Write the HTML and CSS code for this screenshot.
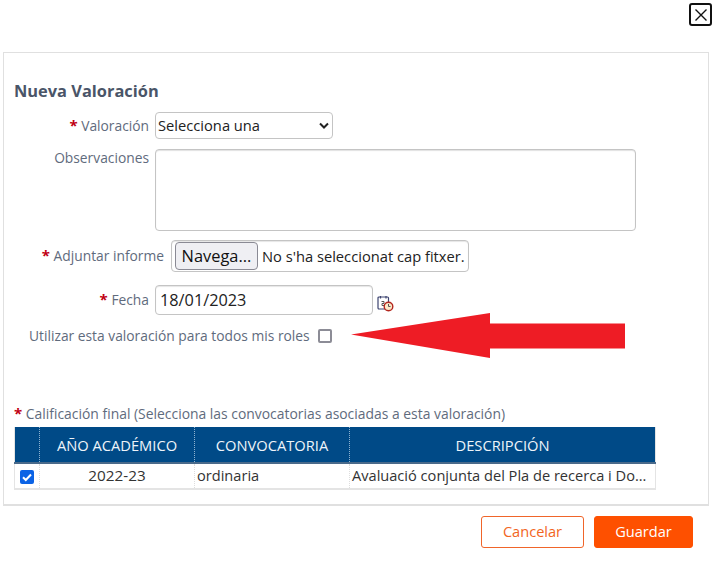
FILE: index.html
```html
<!DOCTYPE html>
<html lang="es">
<head>
<meta charset="utf-8">
<title>Nueva Valoración</title>
<link rel="stylesheet" href="styles.css">
</head>
<body>
<div class="topbar">
  <button class="close" type="button" aria-label="Cerrar">
    <svg width="18" height="18" viewBox="0 0 18 18"><path d="M3.500 3.500l11 11M14.500 3.500l-11 11" fill="none" stroke="#111" stroke-width="1.4"/></svg>
  </button>
</div>
<main class="panel">
  <h2 class="title">Nueva Valoración</h2>
  <div class="row row-val">
    <label class="label w-main"><span class="req">*</span> Valoración</label>
    <select class="field select"><option>Selecciona una</option></select>
  </div>
  <div class="row row-obs">
    <label class="label w-main label-obs">Observaciones</label>
    <textarea class="field area"></textarea>
  </div>
  <div class="row row-file">
    <label class="label w-file"><span class="req">*</span> Adjuntar informe</label>
    <div class="field file"><span class="browse">Navega...</span><span class="file-text">No s'ha seleccionat cap fitxer.</span></div>
  </div>
  <div class="row row-date">
    <label class="label w-main label-date"><span class="req">*</span> Fecha</label>
    <input class="field date" type="text" value="18/01/2023">
    <svg class="cal" width="17" height="17" viewBox="0 0 17 17">
      <rect x="1" y="2" width="10.500" height="12" rx="1" fill="#fff" stroke="#3d4470" stroke-width="1.2"/>
      <path d="M3.500 1v2.500M9 1v2.500" stroke="#3d4470" stroke-width="1.200"/>
      <path d="M4.500 6.500h2.500v2h-2v2h2.500" fill="none" stroke="#555" stroke-width="1"/>
      <circle cx="11.500" cy="11.500" r="4.300" fill="#fbe8c8" stroke="#b3261e" stroke-width="1.400"/>
      <path d="M11.500 9v2.500h2" fill="none" stroke="#555" stroke-width="1"/>
    </svg>
  </div>
  <div class="row row-check">
    <label class="label">Utilizar esta valoración para todos mis roles</label>
    <span class="box"></span>
  </div>
  <p class="label cal-label"><span class="req">*</span> Calificación final (Selecciona las convocatorias asociadas a esta valoración)</p>
  <table class="grid">
    <colgroup><col class="c1"><col class="c2"><col class="c3"><col class="c4"></colgroup>
    <thead>
      <tr><th></th><th>AÑO ACADÉMICO</th><th>CONVOCATORIA</th><th>DESCRIPCIÓN</th></tr>
    </thead>
    <tbody>
      <tr>
        <td class="center"><span class="tick"><svg width="14" height="14" viewBox="0 0 14 14"><path d="M3 7.200l2.800 2.800L11 4.500" fill="none" stroke="#fff" stroke-width="2"/></svg></span></td>
        <td class="center year">2022-23</td>
        <td>ordinaria</td>
        <td>Avaluació conjunta del Pla de recerca i Do...</td>
      </tr>
    </tbody>
  </table>
</main>
<div class="actions">
  <button class="btn ghost" type="button">Cancelar</button>
  <button class="btn solid" type="button">Guardar</button>
</div>
<svg class="arrow" width="277" height="47" viewBox="0 0 277 47"><path d="M1 22.500L140 1v10.500h135v25H140V46z" fill="#ee1c25"/></svg>
</body>
</html>
```
FILE: styles.css
```css
* { box-sizing: border-box; }
html, body { margin: 0; padding: 0; background: #fff; }
body {
  position: relative;
  width: 717px;
  height: 566px;
  overflow: hidden;
  font-family: "Open Sans", "Noto Sans", sans-serif;
  font-size: 14px;
  color: #333;
}
.topbar { display: flex; justify-content: flex-end; height: 52px; padding: 3px 5px 0 0; }
.close {
  width: 23px; height: 23px; padding: 0;
  display: flex; align-items: center; justify-content: center;
  background: #fff; border: 2px solid #111; border-radius: 3px;
}
.panel {
  margin-left: 3px; width: 706px; height: 454px;
  border: 1px solid #e0e0e0; border-width: 1px 1px 2px 1px;
  padding: 0 0 0 10px;
}
.title {
  margin: 27px 0 0; font-size: 16.400px; line-height: 22px; font-weight: 700;
  color: #4a5568;
}
.row { display: flex; }
.label { color: #5f6b7d; font-size: 13.800px; line-height: 18px; }
.w-main { width: 135px; text-align: right; margin-right: 6px; }
.w-file { width: 150px; text-align: right; margin-right: 7px; }
.req { color: #c00014; font-weight: 700; font-size: 15px; }
.field {
  border: 1px solid #c4c4c4; border-radius: 4px; background: #fff;
  font-family: "Open Sans", "Noto Sans", sans-serif; font-size: 14.700px; color: #222;
}
.row-val { margin-top: 10px; height: 27px; align-items: center; }
.select {
  width: 178px; height: 27px; padding: 0 0 2px 2px;
  appearance: none;
  background: #fff url("data:image/svg+xml,%3Csvg xmlns='http://www.w3.org/2000/svg' width='10' height='7' viewBox='0 0 10 7'%3E%3Cpath d='M1 1.500l4 4 4-4' fill='none' stroke='%23222' stroke-width='2'/%3E%3C/svg%3E") no-repeat right 3px center;
}
.row-obs { margin-top: 10px; }
.label-obs { padding-top: 0; }
.area { width: 481px; height: 82px; resize: none; display: block; box-shadow: inset 0 1px 1px rgba(0,0,0,.12); }
.row-file { margin-top: 9px; height: 31px; align-items: center; }
.file {
  width: 298px; height: 32px; display: flex; align-items: center; padding-left: 3px;
  box-shadow: inset 0 1px 1px rgba(0,0,0,.1);
}
.browse {
  width: 83px; height: 28px; line-height: 26px; text-align: center;
  background: #efeff3; border: 1px solid #8a8a94; border-radius: 4px; font-size: 16.400px; color: #111;
}
.file-text { margin-left: 4px; white-space: nowrap; font-size: 14.700px; color: #222; }
.row-date { margin-top: 14px; height: 30px; align-items: center; }
.label-date { margin-top: -2px; }
.date { width: 218px; height: 30px; padding: 0 4px; font-size: 16.300px; box-shadow: inset 0 1px 1px rgba(0,0,0,.1); }
.cal { margin: 6px 0 0 4px; }
.row-check { margin-top: 11px; margin-left: 15px; height: 20px; align-items: center; }
.box { width: 14px; height: 14px; margin-left: 8px; border: 2px solid #8c8c96; border-radius: 2px; background: #fff; }
.cal-label { margin: 58px 0 0; height: 18px; font-size: 13.900px; }
.grid {
  margin-top: 5px; width: 642px; border-collapse: collapse; table-layout: fixed;
  border-right: 1px solid #e4e4e4; border-bottom: 2px solid #e4e4e4; border-left: 1px solid #e4e4e4;
}
.c1 { width: 25px; } .c2 { width: 155px; } .c3 { width: 155px; } .c4 { width: 306px; }
th {
  height: 36px; padding: 0; background: #004a87; color: #eef4fa;
  font-size: 14.700px; font-weight: 400; text-align: center;
  border-left: 1px dotted #8fb3d0; border-bottom: 2px solid #4a6a8a;
}
th:first-child { border-left: 0; }
td {
  height: 26px; padding: 0 2px 2px; font-size: 14.600px; color: #333;
  border-left: 1px dotted #ddd; white-space: nowrap; overflow: hidden;
}
td:first-child { border-left: 0; padding: 0 0 2px; }
.center { text-align: center; }
.year { font-size: 15.300px; }
.tick {
  display: inline-flex; vertical-align: middle; width: 14px; height: 14px;
  background: #0b63e5; border-radius: 2px;
}
.actions { display: flex; justify-content: flex-end; gap: 10px; margin: 10px 24px 0 0; }
.btn {
  height: 32px; border-radius: 3px; font-family: "Open Sans", "Noto Sans", sans-serif;
  font-size: 14.600px; padding: 0 0 2px;
}
.ghost { width: 103px; background: #fff; color: #f26522; border: 1px solid #f0652a; }
.solid { width: 99px; background: #fe5000; color: #fff; border: 1px solid #fe5000; }
.arrow { position: absolute; left: 350px; top: 312px; }
```
